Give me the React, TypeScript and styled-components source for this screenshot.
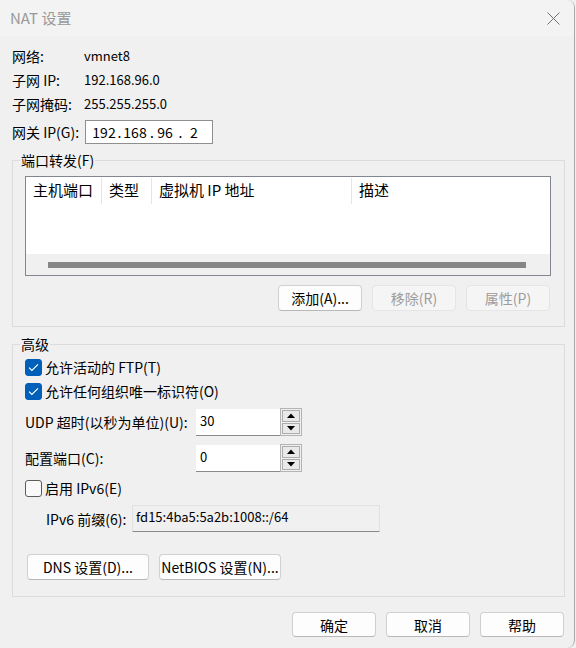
import styled, { createGlobalStyle } from "styled-components";

const GlobalStyle = createGlobalStyle`
  html, body {
    margin: 0;
    padding: 0;
    background: #f0f0f0;
  }
  body {
    font-family: "Noto Sans CJK SC", "Noto Sans", sans-serif;
    font-size: 14px;
    color: #000;
  }
`;

const Window = styled.div`
  width: 574px;
  height: 648px;
  background: #f0f0f0;
  border-right: 1px solid #a8a8a8;
  border-radius: 0 8px 8px 0;
  overflow: hidden;
  display: flex;
  flex-direction: column;
`;

const TitleBar = styled.div`
  height: 36px;
  flex: none;
  background: #f3f3f3;
  display: flex;
  align-items: center;
  justify-content: space-between;
  padding: 0 14px 0 10px;
`;

const Title = styled.div`
  font-size: 15px;
  line-height: 20px;
  color: #9a9a9a;
`;

const Body = styled.div`
  display: flex;
  flex-direction: column;
  padding: 8px 9px 0 12px;
  line-height: 18px;
`;

const InfoGrid = styled.div`
  display: grid;
  grid-template-columns: 72px auto;
  grid-auto-rows: 24px;
  align-items: center;
`;

// Latin values render a little narrower than the labels
const Value = styled.span`
  font-size: 13px;
`;

const GatewayRow = styled.div`
  display: flex;
  align-items: center;
  height: 24px;
  margin-top: 4px;
`;

const GatewayLabel = styled.span`
  width: 73px;
`;

const IpBox = styled.div`
  width: 128px;
  height: 24px;
  box-sizing: border-box;
  background: #fff;
  border: 1px solid #8f8f8f;
  display: flex;
  align-items: center;
  padding-left: 5px;
  font-size: 14px;
`;

const Octet = styled.span<{ $w: number }>`
  width: ${(p) => p.$w}px;
  text-align: center;
`;

const Dot = styled.span<{ $w: number }>`
  width: ${(p) => p.$w}px;
  text-align: center;
`;

const GroupBox = styled.fieldset<{ $mt: number }>`
  margin: ${(p) => p.$mt}px 0 0 0;
  padding: 0;
  border: 1px solid #dcdcdc;
  min-width: 0;
`;

const Legend = styled.legend`
  margin-left: 7px;
  padding: 0 1px;
  line-height: 18px;
`;

const GroupInner = styled.div<{ $pt: number; $pb: number }>`
  padding: ${(p) => p.$pt}px 13px ${(p) => p.$pb}px 12px;
  display: flex;
  flex-direction: column;
`;

const ListView = styled.div`
  height: 100px;
  box-sizing: border-box;
  border: 1px solid #82878f;
  background: #fff;
  display: flex;
  flex-direction: column;
`;

const ListHeader = styled.div`
  display: flex;
  height: 26px;
  padding-top: 1px;
  font-size: 15px;
`;

const HeaderCell = styled.div<{ $w?: number }>`
  ${(p) => (p.$w ? `width: ${p.$w}px;` : "flex: 1;")}
  box-sizing: border-box;
  padding-left: 7px;
  line-height: 24px;
  border-right: ${(p) => (p.$w ? "1px solid #e5e5e5" : "none")};
`;

const ListBody = styled.div`
  flex: 1;
`;

const HScroll = styled.div`
  height: 21px;
  background: #f0f0f0;
  display: flex;
  align-items: center;
  padding: 0 24px 0 22px;
`;

const Thumb = styled.div`
  flex: 1;
  height: 6px;
  background: #868686;
`;

const ButtonRow = styled.div<{ $mt: number; $pr: number }>`
  display: flex;
  justify-content: flex-end;
  gap: 10px;
  margin-top: ${(p) => p.$mt}px;
  padding-right: ${(p) => p.$pr}px;
`;

const Button = styled.button<{ $w?: number; $h?: number }>`
  width: ${(p) => p.$w ?? 84}px;
  height: ${(p) => p.$h ?? 26}px;
  box-sizing: border-box;
  font-family: inherit;
  font-size: 14px;
  line-height: 18px;
  padding: 0;
  color: #000;
  background: #fdfdfd;
  border: 1px solid #d0d0d0;
  border-bottom-color: #b8b8b8;
  border-radius: 4px;

  &:disabled {
    color: #9c9c9c;
    background: #f5f5f5;
    border-color: #e5e5e5;
  }
`;

const CheckRow = styled.label`
  display: flex;
  align-items: center;
  height: 24px;
  gap: 3px;
`;

const CheckBox = styled.span<{ $checked: boolean }>`
  width: 17px;
  height: 17px;
  box-sizing: border-box;
  border-radius: 3px;
  display: flex;
  align-items: center;
  justify-content: center;
  background: ${(p) => (p.$checked ? "#005fb8" : "#f9f9f9")};
  border: 1px solid ${(p) => (p.$checked ? "#005fb8" : "#5c5c5c")};
`;

const FieldRow = styled.div<{ $mt: number }>`
  display: flex;
  align-items: center;
  margin-top: ${(p) => p.$mt}px;
`;

const FieldLabel = styled.span<{ $w: number; $indent?: number }>`
  width: ${(p) => p.$w}px;
  padding-left: ${(p) => p.$indent ?? 0}px;
  box-sizing: border-box;
`;

const SpinInput = styled.div`
  width: 84px;
  height: 27px;
  box-sizing: border-box;
  background: #fff;
  border-bottom: 1px solid #8a8a8a;
  padding: 2px 0 0 4px;
`;

const SpinBox = styled.div`
  width: 22px;
  height: 28px;
  box-sizing: border-box;
  border: 1px solid #b4b4b4;
  padding: 1px;
  display: flex;
  flex-direction: column;
  gap: 1px;
`;

const SpinButton = styled.div`
  flex: 1;
  border: 1px solid #adadad;
  background: #e9e9e9;
  display: flex;
  align-items: center;
  justify-content: center;
`;

const PrefixField = styled.div`
  width: 248px;
  height: 27px;
  box-sizing: border-box;
  background: #f0f0f0;
  border: 1px solid #e2e2e2;
  border-bottom-color: #8a8a8a;
  padding: 0 0 0 3px;
  line-height: 20px;
`;

const DnsRow = styled.div`
  display: flex;
  gap: 10px;
  margin: 22px 0 0 2px;
`;

const FooterRow = styled.div`
  display: flex;
  justify-content: flex-end;
  gap: 10px;
  margin-top: 15px;
  padding-right: 1px;
`;

function CloseIcon() {
  return (
    <svg width="13" height="13" viewBox="0 0 13 13">
      <path d="M0.5 0.5 L12.5 12.5 M12.5 0.5 L0.5 12.5" stroke="#707070" strokeWidth="1" fill="none" />
    </svg>
  );
}

function Check({ checked, label }: { checked: boolean; label: string }) {
  return (
    <CheckRow>
      <CheckBox $checked={checked}>
        {checked && (
          <svg width="11" height="9" viewBox="0 0 11 9">
            <path d="M1 4.6 L3.9 7.4 L10 1.3" stroke="#fff" strokeWidth="1.2" fill="none" />
          </svg>
        )}
      </CheckBox>
      <span>{label}</span>
    </CheckRow>
  );
}

function Arrow({ up }: { up: boolean }) {
  return (
    <svg width="8" height="5" viewBox="0 0 8 5">
      <path d={up ? "M0 5 L4 0.5 L8 5 Z" : "M0 0 L8 0 L4 4.5 Z"} fill="#000" />
    </svg>
  );
}

function Spinner({ value }: { value: string }) {
  return (
    <>
      <SpinInput>
        <Value>{value}</Value>
      </SpinInput>
      <SpinBox>
        <SpinButton>
          <Arrow up />
        </SpinButton>
        <SpinButton>
          <Arrow up={false} />
        </SpinButton>
      </SpinBox>
    </>
  );
}

export default function App() {
  return (
    <>
      <GlobalStyle />
      <Window>
        <TitleBar>
          <Title>NAT 设置</Title>
          <CloseIcon />
        </TitleBar>
        <Body>
          <InfoGrid>
            <span>网络:</span>
            <Value>vmnet8</Value>
            <span>子网 IP:</span>
            <Value>192.168.96.0</Value>
            <span>子网掩码:</span>
            <Value>255.255.255.0</Value>
          </InfoGrid>
          <GatewayRow>
            <GatewayLabel>网关 IP(G):</GatewayLabel>
            <IpBox>
              <Octet $w={26}>192</Octet>
              <Dot $w={5}>.</Dot>
              <Octet $w={26}>168</Octet>
              <Dot $w={8}>.</Dot>
              <Octet $w={18}>96</Octet>
              <Dot $w={13}>.</Dot>
              <Octet $w={14}>2</Octet>
            </IpBox>
          </GatewayRow>

          <GroupBox $mt={7}>
            <Legend>端口转发(F)</Legend>
            <GroupInner $pt={7} $pb={15}>
              <ListView>
                <ListHeader>
                  <HeaderCell $w={76}>主机端口</HeaderCell>
                  <HeaderCell $w={50}>类型</HeaderCell>
                  <HeaderCell $w={200}>虚拟机 IP 地址</HeaderCell>
                  <HeaderCell>描述</HeaderCell>
                </ListHeader>
                <ListBody />
                <HScroll>
                  <Thumb />
                </HScroll>
              </ListView>
              <ButtonRow $mt={9} $pr={1}>
                <Button>添加(A)...</Button>
                <Button disabled>移除(R)</Button>
                <Button disabled>属性(P)</Button>
              </ButtonRow>
            </GroupInner>
          </GroupBox>

          <GroupBox $mt={8}>
            <Legend>高级</Legend>
            <GroupInner $pt={2} $pb={16}>
              <Check checked label="允许活动的 FTP(T)" />
              <Check checked label="允许任何组织唯一标识符(O)" />
              <FieldRow $mt={5}>
                <FieldLabel $w={171}>UDP 超时(以秒为单位)(U):</FieldLabel>
                <Spinner value="30" />
              </FieldRow>
              <FieldRow $mt={8}>
                <FieldLabel $w={171}>配置端口(C):</FieldLabel>
                <Spinner value="0" />
              </FieldRow>
              <FieldRow $mt={4}>
                <Check checked={false} label="启用 IPv6(E)" />
              </FieldRow>
              <FieldRow $mt={5}>
                <FieldLabel $w={107} $indent={21}>IPv6 前缀(6):</FieldLabel>
                <PrefixField>
                  <Value>fd15:4ba5:5a2b:1008::/64</Value>
                </PrefixField>
              </FieldRow>
              <DnsRow>
                <Button $w={122}>DNS 设置(D)...</Button>
                <Button $w={122}>NetBIOS 设置(N)...</Button>
              </DnsRow>
            </GroupInner>
          </GroupBox>

          <FooterRow>
            <Button $h={25}>确定</Button>
            <Button $h={25}>取消</Button>
            <Button $h={25}>帮助</Button>
          </FooterRow>
        </Body>
      </Window>
    </>
  );
}
